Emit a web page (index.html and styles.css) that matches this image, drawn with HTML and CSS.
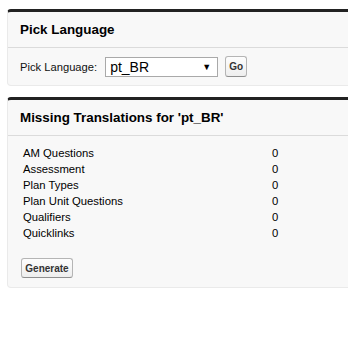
FILE: index.html
```html
<!DOCTYPE html>
<html>
<head>
<meta charset="utf-8">
<link rel="stylesheet" href="styles.css">
</head>
<body>
<div class="page">
  <div class="block">
    <div class="block-head"><h2>Pick Language</h2></div>
    <div class="block-body pick-row">
      <label class="lbl">Pick Language:</label>
      <div class="select"><span class="sel-val">pt_BR</span><span class="sel-arrow">&#9660;</span></div>
      <button class="btn btn-go">Go</button>
    </div>
  </div>
  <div class="block">
    <div class="block-head"><h2>Missing Translations for 'pt_BR'</h2></div>
    <div class="block-body list-body">
      <div class="rows">
        <div class="row"><span class="name">AM Questions</span><span class="val">0</span></div>
        <div class="row"><span class="name">Assessment</span><span class="val">0</span></div>
        <div class="row"><span class="name">Plan Types</span><span class="val">0</span></div>
        <div class="row"><span class="name">Plan Unit Questions</span><span class="val">0</span></div>
        <div class="row"><span class="name">Qualifiers</span><span class="val">0</span></div>
        <div class="row"><span class="name">Quicklinks</span><span class="val">0</span></div>
      </div>
      <button class="btn btn-gen">Generate</button>
    </div>
  </div>
</div>
</body>
</html>
```

FILE: styles.css
```css
html { overflow: hidden; background: #fff; }
body {
  margin: 0;
  padding: 9px 0 0 7px;
  font-family: "Liberation Sans", Arial, sans-serif;
  color: #000;
}
.page { width: 380px; }
.block {
  background: #f8f8f8;
  border: 1px solid #eaeaea;
  border-top: 3px solid #222;
  border-radius: 4px;
  margin-bottom: 11px;
}
.block-head {
  height: 35px;
  display: flex;
  align-items: center;
  padding-left: 12px;
  border-bottom: 1px solid #dbdbdb;
}
.block-head h2 {
  margin: 0;
  font-size: 13.4px;
  font-weight: bold;
  color: #000;
}
.pick-row {
  display: flex;
  align-items: center;
  height: 37px;
  padding-left: 12px;
}
.lbl {
  font-size: 11.2px;
  color: #111;
  margin-right: 8px;
}
.select {
  height: 18px;
  border: 1px solid #a9a9a9;
  background: #fff;
  display: flex;
  align-items: center;
  justify-content: space-between;
  padding: 0 6px 0 4px;
  box-sizing: content-box;
  margin-right: 7px;
  width: 101px;
}
.sel-val { font-size: 14px; color: #000; }
.sel-arrow { font-size: 9px; color: #000; }
.btn {
  font-family: "Liberation Sans", Arial, sans-serif;
  font-weight: bold;
  font-size: 10px;
  color: #333;
  background: linear-gradient(#fdfdfd, #eeeeee);
  border: 1px solid #b5b5b5;
  border-bottom-color: #8f8f8f;
  border-radius: 3px;
  padding: 0;
  height: 21px;
}
.btn-go { width: 22px; }
.list-body { padding: 9px 0 9px 15px; }
.rows { display: flex; flex-direction: column; }
.row {
  display: flex;
  height: 16px;
  align-items: center;
  font-size: 11.3px;
}
.name { width: 249px; }
.btn-gen { margin-top: 17px; width: 52px; height: 20px; margin-left: -2px; }
```
